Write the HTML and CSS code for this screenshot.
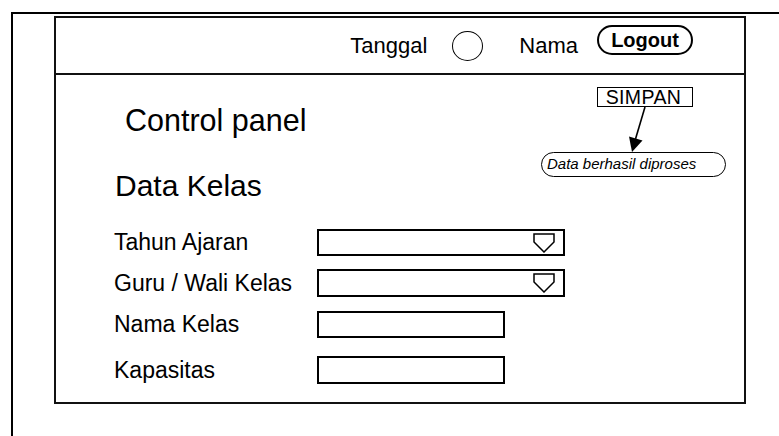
FILE: index.html
```html
<!DOCTYPE html>
<html lang="id">
<head>
<meta charset="utf-8">
<title>Control panel - Data Kelas</title>
<link rel="stylesheet" href="styles.css">
</head>
<body>
<div class="sheet">
  <div class="window">
    <header class="topbar">
      <span class="topbar-text">Tanggal</span>
      <span class="avatar"></span>
      <span class="topbar-text topbar-name">Nama</span>
      <button class="btn-logout" type="button">Logout</button>
    </header>

    <main class="content">
      <div class="content-top">
        <div class="titles">
          <h1 class="panel-title">Control panel</h1>
          <h2 class="section-title">Data Kelas</h2>
        </div>

        <div class="notice">
          <button class="btn-save" type="button">SIMPAN</button>
          <svg class="notice-arrow" width="185" height="45" viewBox="0 0 185 45">
            <line x1="104" y1="0" x2="94.5" y2="32" stroke="#000" stroke-width="1.6"/>
            <polygon points="91,45 88,29.5 101.5,33.5" fill="#000"/>
          </svg>
          <div class="toast">Data berhasil diproses</div>
        </div>
      </div>

      <form class="form">
        <div class="field field-1">
          <label class="field-label">Tahun Ajaran</label>
          <div class="select">
            <svg class="select-icon" width="22" height="20" viewBox="0 0 22 20">
              <polygon points="1,1 21,1 21,9 11,19 1,9" fill="none" stroke="#000" stroke-width="1.5" stroke-linejoin="miter"/>
            </svg>
          </div>
        </div>
        <div class="field field-2">
          <label class="field-label">Guru / Wali Kelas</label>
          <div class="select">
            <svg class="select-icon" width="22" height="20" viewBox="0 0 22 20">
              <polygon points="1,1 21,1 21,9 11,19 1,9" fill="none" stroke="#000" stroke-width="1.5" stroke-linejoin="miter"/>
            </svg>
          </div>
        </div>
        <div class="field field-3">
          <label class="field-label">Nama Kelas</label>
          <div class="text-input"></div>
        </div>
        <div class="field field-4">
          <label class="field-label">Kapasitas</label>
          <div class="text-input"></div>
        </div>
      </form>
    </main>
  </div>
</div>
</body>
</html>
```

FILE: styles.css
```css
html, body {
  margin: 0;
  padding: 0;
  width: 779px;
  height: 436px;
  overflow: hidden;
  background: #fff;
  color: #000;
  font-family: "Liberation Sans", Arial, sans-serif;
}

/* outer page frame: only top and left edges are visible */
.sheet {
  box-sizing: border-box;
  margin: 12px 0 0 11px;
  height: 424px;
  border-top: 2px solid #000;
  border-left: 2px solid #000;
  padding: 2px 0 0 41px;
}

.window {
  box-sizing: border-box;
  width: 692px;
  height: 388px;
  border: 2px solid #111;
  display: flex;
  flex-direction: column;
}

/* top bar */
.topbar {
  box-sizing: border-box;
  height: 57px;
  flex: none;
  border-bottom: 2px solid #111;
  display: flex;
  align-items: center;
  justify-content: flex-end;
  padding-right: 51px;
}

.topbar-text {
  font-size: 22px;
}

.avatar {
  box-sizing: border-box;
  width: 31px;
  height: 30px;
  border: 1.5px solid #000;
  border-radius: 50%;
  margin-left: 25px;
  margin-right: 36px;
}

.topbar-name {
  margin-right: 19px;
}

.btn-logout {
  box-sizing: border-box;
  width: 96px;
  height: 30px;
  margin: 0 0 12px 0;
  padding: 0;
  border: 2px solid #000;
  border-radius: 15px;
  background: #fff;
  color: #000;
  font-family: "Liberation Sans", Arial, sans-serif;
  font-weight: bold;
  font-size: 20px;
  line-height: 26px;
}

/* main content */
.content {
  flex: 1;
  display: flex;
  flex-direction: column;
}

.content-top {
  display: flex;
  align-items: flex-start;
}

.titles {
  margin-top: 28px;
}

.panel-title,
.section-title {
  margin: 0;
  font-weight: normal;
  font-size: 30px;
  line-height: 35px;
}

.panel-title {
  padding-left: 69px;
  font-size: 30.5px;
}

.section-title {
  margin-top: 30px;
  padding-left: 59px;
}

.notice {
  margin: 12px 18px 0 auto;
  width: 185px;
  display: flex;
  flex-direction: column;
}

.btn-save {
  box-sizing: border-box;
  align-self: flex-end;
  margin: 0 33px 0 0;
  width: 96px;
  height: 20px;
  padding: 0 3px 0 0;
  border: 1.5px solid #000;
  background: #fff;
  color: #000;
  font-family: "Liberation Sans", Arial, sans-serif;
  font-size: 19.5px;
  letter-spacing: 0.4px;
  line-height: 17px;
}

.notice-arrow {
  display: block;
}

.toast {
  box-sizing: border-box;
  height: 25px;
  border: 1.5px solid #000;
  border-radius: 13px;
  padding-left: 5px;
  font-style: italic;
  font-size: 15px;
  line-height: 22px;
  white-space: nowrap;
}

/* form */
.form {
  margin: 26px 0 0 0;
  padding-left: 58px;
  display: flex;
  flex-direction: column;
}

.field {
  display: flex;
  align-items: center;
  height: 27px;
}

.field-2 { margin-top: 13px; height: 28px; }
.field-3 { margin-top: 14px; }
.field-4 { margin-top: 18px; height: 28px; }

.field-label {
  width: 203px;
  font-size: 23px;
  white-space: nowrap;
}

.select,
.text-input {
  box-sizing: border-box;
  height: 100%;
  border: 2px solid #000;
  background: #fff;
}

.select {
  width: 248px;
  display: flex;
  align-items: center;
  justify-content: flex-end;
  padding-right: 8px;
}

.select-icon {
  display: block;
}

.text-input {
  width: 188px;
}
```
